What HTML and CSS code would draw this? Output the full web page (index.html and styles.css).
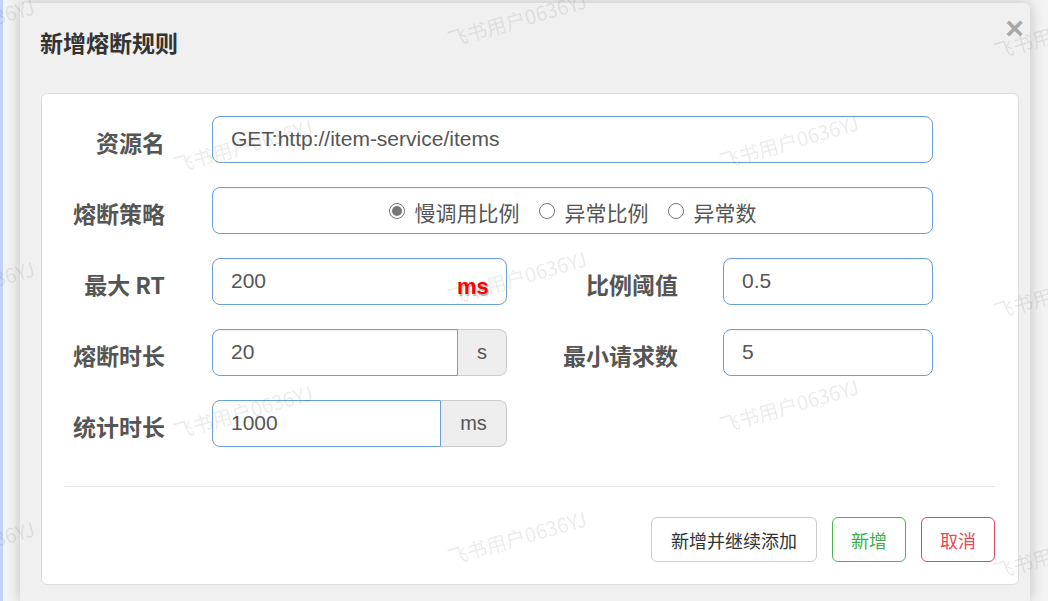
FILE: index.html
```html
<!DOCTYPE html>
<html lang="zh-CN">
<head>
  <meta charset="UTF-8" />
  <title>新增熔断规则</title>
  <link rel="stylesheet" href="styles.css">
</head>
<body>

<div class="page">
  <div class="edge"></div>

  <!-- ダイアログ -->
  <div class="modal">
    <div class="modal-header">
      <h3 class="modal-title">新增熔断规则</h3>
      <span class="close">&times;</span>
    </div>

    <div class="panel">
      <div class="form-grid">
        <label class="label">资源名</label>
        <div class="input wide">GET:http://item-service/items</div>

        <label class="label">熔断策略</label>
        <div class="input wide radios">
          <span class="radio checked"><i></i>慢调用比例</span>
          <span class="radio"><i></i>异常比例</span>
          <span class="radio"><i></i>异常数</span>
        </div>

        <label class="label">最大 RT</label>
        <div class="input has-unit">200<span class="unit-red">ms</span></div>
        <label class="label right">比例阈值</label>
        <div class="input">0.5</div>

        <label class="label">熔断时长</label>
        <div class="input-group">
          <div class="input">20</div>
          <span class="addon s">s</span>
        </div>
        <label class="label right">最小请求数</label>
        <div class="input">5</div>

        <label class="label">统计时长</label>
        <div class="input-group">
          <div class="input">1000</div>
          <span class="addon ms">ms</span>
        </div>
      </div>

      <hr class="line">

      <div class="actions">
        <button class="btn">新增并继续添加</button>
        <button class="btn btn-ok">新增</button>
        <button class="btn btn-cancel">取消</button>
      </div>
    </div>
  </div>
</div>

<!-- 透かし -->
<div class="watermark">
  <span style="left:-100px;top:30px">飞书用户0636YJ</span>
  <span style="left:452px;top:24px">飞书用户0636YJ</span>
  <span style="left:998px;top:36px">飞书用户0636YJ</span>
  <span style="left:178px;top:150px">飞书用户0636YJ</span>
  <span style="left:724px;top:146px">飞书用户0636YJ</span>
  <span style="left:-100px;top:292px">飞书用户0636YJ</span>
  <span style="left:452px;top:282px">飞书用户0636YJ</span>
  <span style="left:998px;top:296px">飞书用户0636YJ</span>
  <span style="left:178px;top:416px">飞书用户0636YJ</span>
  <span style="left:724px;top:410px">飞书用户0636YJ</span>
  <span style="left:-100px;top:552px">飞书用户0636YJ</span>
  <span style="left:452px;top:542px">飞书用户0636YJ</span>
  <span style="left:998px;top:556px">飞书用户0636YJ</span>
</div>

</body>
</html>
```

FILE: styles.css
```css
* {
  margin: 0;
  padding: 0;
  box-sizing: border-box;
}

body {
  font-family: "Liberation Sans", "Noto Sans CJK SC", sans-serif;
  background: #f3f3f3;
  color: #555;
  overflow: hidden;
  height: 601px;
}

.page {
  display: flex;
  height: 601px;
}

.edge {
  width: 3px;
  background: #c4d2fa;
  flex-shrink: 0;
}

/* ダイアログ */
.modal {
  width: 1010px;
  margin: 3px 0 0 17px;
  background: #f0f0f0;
  border-radius: 6px 6px 0 0;
  box-shadow: 0 0 14px rgba(0, 0, 0, 0.22);
}

.modal-header {
  display: flex;
  justify-content: space-between;
  align-items: flex-start;
  padding: 24px 6px 36px 20px;
}

.modal-title {
  font-family: "Noto Sans CJK SC", sans-serif;
  font-size: 23px;
  line-height: 30px;
  font-weight: bold;
  color: #333;
}

.close {
  margin-top: -15px;
  font-size: 32px;
  line-height: 32px;
  font-weight: bold;
  color: #a8a8a8;
}

.panel {
  margin: 0 11px 0 21px;
  background: #fff;
  border: 1px solid #ddd;
  border-radius: 6px;
  padding: 22px 23px 22px;
}

/* フォーム */
.form-grid {
  display: grid;
  grid-template-columns: 147px 295px 216px 210px;
  grid-auto-rows: 47px;
  row-gap: 24px;
  align-items: center;
}

.label {
  font-family: "Noto Sans CJK SC", sans-serif;
  font-size: 23px;
  font-weight: bold;
  color: #555;
  text-align: right;
  padding-right: 47px;
  padding-top: 4px;
  white-space: nowrap;
}

.label.right {
  padding-right: 45px;
}

.input {
  height: 47px;
  border: 1px solid #6b9fd6;
  border-radius: 8px;
  padding: 0 18px;
  font-size: 21px;
  line-height: 43px;
  color: #555;
  background: #fff;
  box-shadow: inset 0 1px 1px rgba(0, 0, 0, 0.05);
}

.input.wide {
  grid-column: 2 / 5;
}

.has-unit {
  position: relative;
}

.unit-red {
  position: absolute;
  left: 244px;
  top: 6px;
  font-size: 22px;
  font-weight: bold;
  color: #f00;
  text-shadow: 1px 2px 1px #bbb;
}

.radios {
  display: flex;
  justify-content: center;
  align-items: center;
  gap: 19px;
  padding: 4px 0 0;
}

.radio {
  display: flex;
  align-items: center;
  gap: 10px;
  font-family: "Noto Sans CJK SC", sans-serif;
  font-size: 21px;
  color: #555;
}

.radio i {
  width: 16px;
  height: 16px;
  border: 1px solid #777;
  border-radius: 50%;
  background: #fff;
  position: relative;
  margin-top: -3px;
}

.radio.checked i::after {
  content: '';
  position: absolute;
  top: 2px;
  left: 2px;
  width: 10px;
  height: 10px;
  border-radius: 50%;
  background: #777;
}

.input-group {
  display: flex;
  height: 47px;
}

.input-group .input {
  flex: 1;
  border-radius: 8px 0 0 8px;
}

.addon {
  height: 47px;
  background: #eee;
  border: 1px solid #ccc;
  border-left: none;
  border-radius: 0 8px 8px 0;
  font-size: 20px;
  line-height: 45px;
  text-align: center;
  color: #555;
}

.addon.s {
  width: 49px;
}

.addon.ms {
  width: 66px;
}

.line {
  border: none;
  border-top: 1px solid #e5e5e5;
  margin: 39px 0 30px;
}

/* ボタン */
.actions {
  display: flex;
  justify-content: flex-end;
  gap: 15px;
}

.btn {
  height: 45px;
  padding: 0 19px;
  font-family: "Noto Sans CJK SC", sans-serif;
  font-size: 18px;
  color: #333;
  background: #fff;
  border: 1px solid #ccc;
  border-radius: 6px;
}

.btn-ok {
  width: 74px;
  padding: 0;
  color: #3fae49;
  border-color: #4cb552;
}

.btn-cancel {
  width: 74px;
  padding: 0;
  color: #e34a5a;
  border-color: #e0485a;
}

/* 透かし */
.watermark {
  position: fixed;
  top: 0;
  left: 0;
  width: 100%;
  height: 100%;
  pointer-events: none;
  overflow: hidden;
}

.watermark span {
  position: absolute;
  font-family: "Noto Sans CJK SC", sans-serif;
  font-size: 20px;
  color: rgba(0, 0, 0, 0.08);
  white-space: nowrap;
  transform: rotate(-16deg);
  transform-origin: left bottom;
}
```
